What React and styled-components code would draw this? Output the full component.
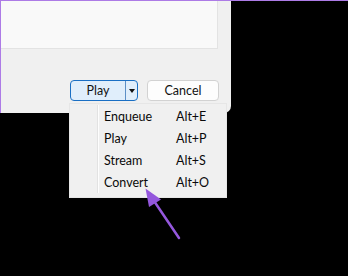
import React from "react";
import styled, { createGlobalStyle } from "styled-components";

const Global = createGlobalStyle`
  html, body { margin: 0; padding: 0; background: #000; }
  body { font-family: "Segoe UI", Lato, "Noto Sans", sans-serif; }
`;

const Page = styled.div`
  position: relative;
  width: 348px;
  height: 276px;
  box-sizing: border-box;
  border-top: 1px solid #ad7be6;
  background: #000;
  overflow: hidden;
`;

const Dialog = styled.div`
  width: 231px;
  height: 112px;
  box-sizing: border-box;
  border-left: 1px solid #ad7be6;
  background: #f0f0f0;
  border-bottom-right-radius: 7px;
  display: flex;
  flex-direction: column;
`;

const Panel = styled.div`
  width: 217px;
  height: 48px;
  box-sizing: border-box;
  background: #f9f9f9;
  border-right: 1px solid #e3e3e3;
  border-bottom: 1px solid #e3e3e3;
`;

const Footer = styled.div`
  display: flex;
  justify-content: flex-end;
  gap: 9px;
  padding: 31px 12px 0 0;
`;

const Split = styled.div`
  display: flex;
  width: 68px;
  height: 21px;
  box-sizing: border-box;
  border: 1px solid #1a6fc4;
  border-radius: 4px;
  background: #e0eefb;
  overflow: hidden;
`;

const SplitMain = styled.div`
  flex: 1;
  display: flex;
  align-items: center;
  justify-content: center;
  font-size: 12.5px;
  color: #111;
  border-right: 1px solid #5c8fc6;
`;

const SplitArrow = styled.div`
  width: 11px;
  display: flex;
  align-items: center;
  justify-content: center;
  &::after {
    content: "";
    border-left: 3.5px solid transparent;
    border-right: 3.5px solid transparent;
    border-top: 4px solid #111;
  }
`;

const Button = styled.div`
  width: 72px;
  height: 21px;
  box-sizing: border-box;
  border: 1px solid #d2d2d2;
  border-radius: 4px;
  background: #fdfdfd;
  display: flex;
  align-items: center;
  justify-content: center;
  font-size: 12.5px;
  color: #111;
`;

const Menu = styled.div`
  position: absolute;
  left: 69px;
  top: 102px;
  width: 158px;
  box-sizing: border-box;
  border: 1px solid #e6e6e6;
  background: #f0f0f0;
  padding: 1px 2px 4px 2px;
  display: grid;
  grid-template-columns: 25px 2px 1fr;
`;

const Gutter = styled.div`
  grid-row: 1 / span 4;
  grid-column: 1;
`;

const Sep = styled.div`
  grid-row: 1 / span 4;
  grid-column: 2;
  border-left: 1px solid #e2e2e2;
  border-right: 1px solid #fdfdfd;
  box-sizing: border-box;
`;

const Item = styled.div`
  grid-column: 3;
  height: 22px;
  display: grid;
  grid-template-columns: 72px 1fr;
  align-items: center;
  padding-left: 5px;
  font-size: 12.5px;
  color: #0a0a0a;
`;

const Arrow = styled.svg`
  position: absolute;
  left: 0;
  top: 0;
  pointer-events: none;
`;

const items = [
  ["Enqueue", "Alt+E"],
  ["Play", "Alt+P"],
  ["Stream", "Alt+S"],
  ["Convert", "Alt+O"],
];

export default function App() {
  return (
    <>
      <Global />
      <Page>
        <Dialog>
          <Panel />
          <Footer>
            <Split>
              <SplitMain>Play</SplitMain>
              <SplitArrow />
            </Split>
            <Button>Cancel</Button>
          </Footer>
        </Dialog>
        <Menu>
          <Gutter />
          <Sep />
          {items.map(([l, s]) => (
            <Item key={l}>
              <span>{l}</span>
              <span>{s}</span>
            </Item>
          ))}
        </Menu>
        <Arrow width="348" height="276" viewBox="0 0 348 276">
          <line x1="179" y1="237" x2="152" y2="197" stroke="#9457dd" strokeWidth="2.5" strokeLinecap="round" />
          <polygon points="145.5,187.5 161,198.5 149,206" fill="#9457dd" />
        </Arrow>
      </Page>
    </>
  );
}
